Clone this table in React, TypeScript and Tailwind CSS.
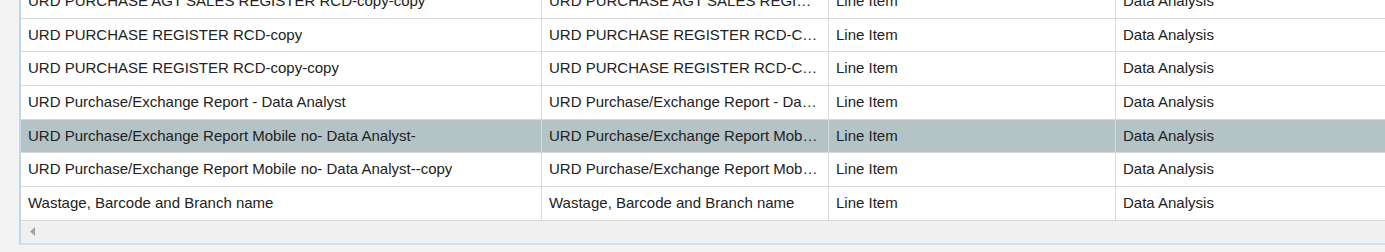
import React from 'react';

type Row = {
  name: string;
  title: string;
  type: string;
  category: string;
  selected?: boolean;
};

const rows: Row[] = [
  { name: 'URD PURCHASE AGT SALES REGISTER RCD-copy-copy', title: 'URD PURCHASE AGT SALES REGISTER RCD-COPY-COPY', type: 'Line Item', category: 'Data Analysis' },
  { name: 'URD PURCHASE REGISTER RCD-copy', title: 'URD PURCHASE REGISTER RCD-COPY', type: 'Line Item', category: 'Data Analysis' },
  { name: 'URD PURCHASE REGISTER RCD-copy-copy', title: 'URD PURCHASE REGISTER RCD-COPY-COPY', type: 'Line Item', category: 'Data Analysis' },
  { name: 'URD Purchase/Exchange Report - Data Analyst', title: 'URD Purchase/Exchange Report - Data Analyst', type: 'Line Item', category: 'Data Analysis' },
  { name: 'URD Purchase/Exchange Report Mobile no- Data Analyst-', title: 'URD Purchase/Exchange Report Mobile no- Data Analyst-', type: 'Line Item', category: 'Data Analysis', selected: true },
  { name: 'URD Purchase/Exchange Report Mobile no- Data Analyst--copy', title: 'URD Purchase/Exchange Report Mobile no- Data Analyst--copy', type: 'Line Item', category: 'Data Analysis' },
  { name: 'Wastage, Barcode and Branch name', title: 'Wastage, Barcode and Branch name', type: 'Line Item', category: 'Data Analysis' },
];

const Cell = ({ children, className = '' }: { children: React.ReactNode; className?: string }) => (
  <div className={`flex items-center pl-[7px] pr-2 border-r border-[#d9d9d9] min-w-0 ${className}`}>
    <span className="truncate">{children}</span>
  </div>
);

export default function App() {
  return (
    <div className="h-[252px] w-full bg-[#f3f3f3] pl-[19px] overflow-hidden font-['Liberation_Sans',Arial,sans-serif] text-[15px] text-[#222]">
      <div className="border-l-2 border-b-2 border-l-[#c2d6e8] border-b-[#cfe1f1] overflow-hidden">
        {/* grid rows, first one is scrolled partly out of view */}
        <div className="-mt-[15px] bg-white">
          {rows.map((r) => (
            <div
              key={r.name}
              className={`grid grid-cols-[521px_287px_287px_1fr] h-[33.67px] border-b border-[#d9d9d9] ${
                r.selected ? 'bg-[#b4c4c6]' : 'bg-white'
              }`}
            >
              <Cell>{r.name}</Cell>
              <Cell>{r.title}</Cell>
              <Cell>{r.type}</Cell>
              <Cell className="border-r-0">{r.category}</Cell>
            </div>
          ))}
        </div>

        {/* horizontal scrollbar */}
        <div className="h-[22px] bg-[#f0f0f0] flex items-center pl-[9px]">
          <svg width="6" height="9" viewBox="0 0 6 9">
            <polygon points="5,0 5,9 0,4.5" fill="#a3a3a3" />
          </svg>
        </div>
      </div>
    </div>
  );
}
